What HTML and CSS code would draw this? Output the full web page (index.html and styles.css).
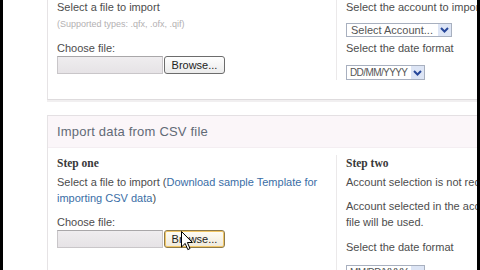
FILE: index.html
```html
<!DOCTYPE html>
<html>
<head>
<meta charset="utf-8">
<link rel="stylesheet" href="styles.css">
</head>
<body>
<div class="frame">
  <section class="panel panel-top">
    <div class="cols">
      <div class="col col-left">
        <p class="txt">Select a file to import</p>
        <p class="hint">(Supported types: .qfx, .ofx, .qif)</p>
        <p class="txt label">Choose file:</p>
        <div class="file"><span class="filebox"></span><span class="browse">Browse...</span></div>
      </div>
      <div class="col col-right">
        <p class="txt">Select the account to import</p>
        <div class="select sel-account"><span class="sel-text">Select Account...</span><span class="arrow"><svg width="9" height="6" viewBox="0 0 9 6"><path d="M1 1 L4.5 4.5 L8 1" fill="none" stroke="#27479a" stroke-width="2"/></svg></span></div>
        <p class="txt gap3">Select the date format</p>
        <div class="select sel-date"><span class="sel-text">DD/MM/YYYY</span><span class="arrow"><svg width="9" height="6" viewBox="0 0 9 6"><path d="M1 1 L4.5 4.5 L8 1" fill="none" stroke="#27479a" stroke-width="2"/></svg></span></div>
      </div>
    </div>
  </section>
  <section class="panel panel-csv">
    <h2 class="panel-head">Import data from CSV file</h2>
    <div class="cols cols-csv">
      <div class="col col-left">
        <h3 class="step">Step one</h3>
        <p class="txt">Select a file to import (<a class="link" href="#">Download sample Template for importing CSV data</a>)</p>
        <p class="txt label2">Choose file:</p>
        <div class="file"><span class="filebox"></span><span class="browse hover">Browse...<svg class="cursor" width="13" height="20" viewBox="0 0 13 20"><path d="M0.5 0.5 L0.5 16 L4.2 12.4 L6.8 18.6 L9 17.6 L6.4 11.5 L11.4 11.5 Z" fill="#fff" stroke="#000" stroke-width="1"/></svg></span></div>
      </div>
      <div class="col col-right">
        <h3 class="step">Step two</h3>
        <p class="txt">Account selection is not required for CSV import.</p>
        <p class="txt gap8">Account selected in the account column of the CSV file will be used.</p>
        <p class="txt gap9">Select the date format</p>
        <div class="select sel-date gap10"><span class="sel-text">MM/DD/YYYY</span><span class="arrow"><svg width="9" height="6" viewBox="0 0 9 6"><path d="M1 1 L4.5 4.5 L8 1" fill="none" stroke="#27479a" stroke-width="2"/></svg></span></div>
      </div>
    </div>
  </section>
</div>
</body>
</html>
```
FILE: styles.css
```css
* { box-sizing: border-box; }
html, body { margin: 0; padding: 0; }
body {
  background: #000;
  padding: 0 3px;
  width: 480px;
  height: 270px;
  overflow: hidden;
  font-family: "Liberation Sans", Arial, sans-serif;
}
.frame {
  background: #fff;
  width: 474px;
  height: 270px;
  overflow: hidden;
}
.panel {
  margin-left: 44px;
  width: 720px;
  border-left: 1px solid #e6e3e5;
  background: #fff;
}
.panel-top {
  margin-top: -1px;
  border-bottom: 1px solid #dedbdd;
  box-shadow: 0 2px 0 #f1eff0;
}
.panel-csv {
  margin-top: 15px;
  border-top: 1px solid #e4e0e3;
}
.panel-head {
  margin: 0;
  height: 32px;
  line-height: 32px;
  padding-left: 9px;
  font-size: 13px;
  font-weight: normal;
  letter-spacing: 0.2px;
  color: #626a76;
  background: #fbf6f9;
  border-bottom: 1px solid #f4eef2;
}
.cols {
  display: flex;
  padding-bottom: 19px;
}
.cols-csv {
  padding-top: 7px;
  padding-bottom: 0;
}
.col-left {
  width: 289px;
  padding: 0 9px;
  border-right: 1px solid #ebe9ea;
}
.col-right {
  width: 280px;
  padding: 0 13px 0 9px;
}
.txt {
  margin: 0;
  font-size: 11px;
  line-height: 16px;
  color: #4d4d4d;
}
.hint {
  margin: 3px 0 0;
  font-size: 9px;
  line-height: 12px;
  color: #b3b0b2;
}
.label { margin-top: 10px; }
.label2 { margin-top: 8px; }
.gap3 { margin-top: 3px; }
.gap8 { margin-top: 8px; }
.gap9 { margin-top: 9px; }
.gap10 { margin-top: 10px; }
.link {
  color: #3a6ea6;
  text-decoration: none;
}
.step {
  margin: 0 0 3px;
  font-family: "Liberation Serif", "Times New Roman", serif;
  font-weight: bold;
  font-size: 11.5px;
  line-height: 16px;
  color: #383838;
}
.file {
  display: flex;
  height: 18px;
}
.filebox {
  width: 106px;
  height: 18px;
  background: linear-gradient(#efedef, #e6e3e6);
  border: 1px solid #c9c6c9;
  border-top-color: #a9a7a9;
}
.browse {
  position: relative;
  width: 61px;
  height: 18px;
  margin-left: 1px;
  border: 1px solid #6c6c6c;
  border-radius: 3px;
  background: linear-gradient(#fefefe, #ebebeb);
  font-size: 11px;
  line-height: 16px;
  text-align: center;
  color: #222;
}
.browse.hover {
  border-color: #8d7a4c;
  box-shadow: inset 0 0 0 1px #f2c766;
  background: linear-gradient(#fffdf6, #efe9da);
}
.cursor {
  position: absolute;
  left: 16px;
  top: 0px;
}
.select {
  display: flex;
  align-items: center;
  margin-top: 8px;
  height: 14px;
  border: 1px solid #a8b0bf;
  background: #fff;
  font-size: 11px;
  color: #555;
}
.sel-account { width: 106px; }
.sel-date {
  width: 79px;
  height: 15px;
  margin-top: 9px;
  font-size: 10px;
  letter-spacing: -0.6px;
}
.sel-date .sel-text { padding-left: 3px; }
.sel-date.gap10 { margin-top: 10px; }
.sel-text {
  flex: 1;
  padding-left: 4px;
  white-space: nowrap;
  overflow: hidden;
  line-height: 12px;
}
.arrow {
  width: 13px;
  height: 100%;
  display: flex;
  align-items: center;
  justify-content: center;
  background: #dde5f5;
}
```
